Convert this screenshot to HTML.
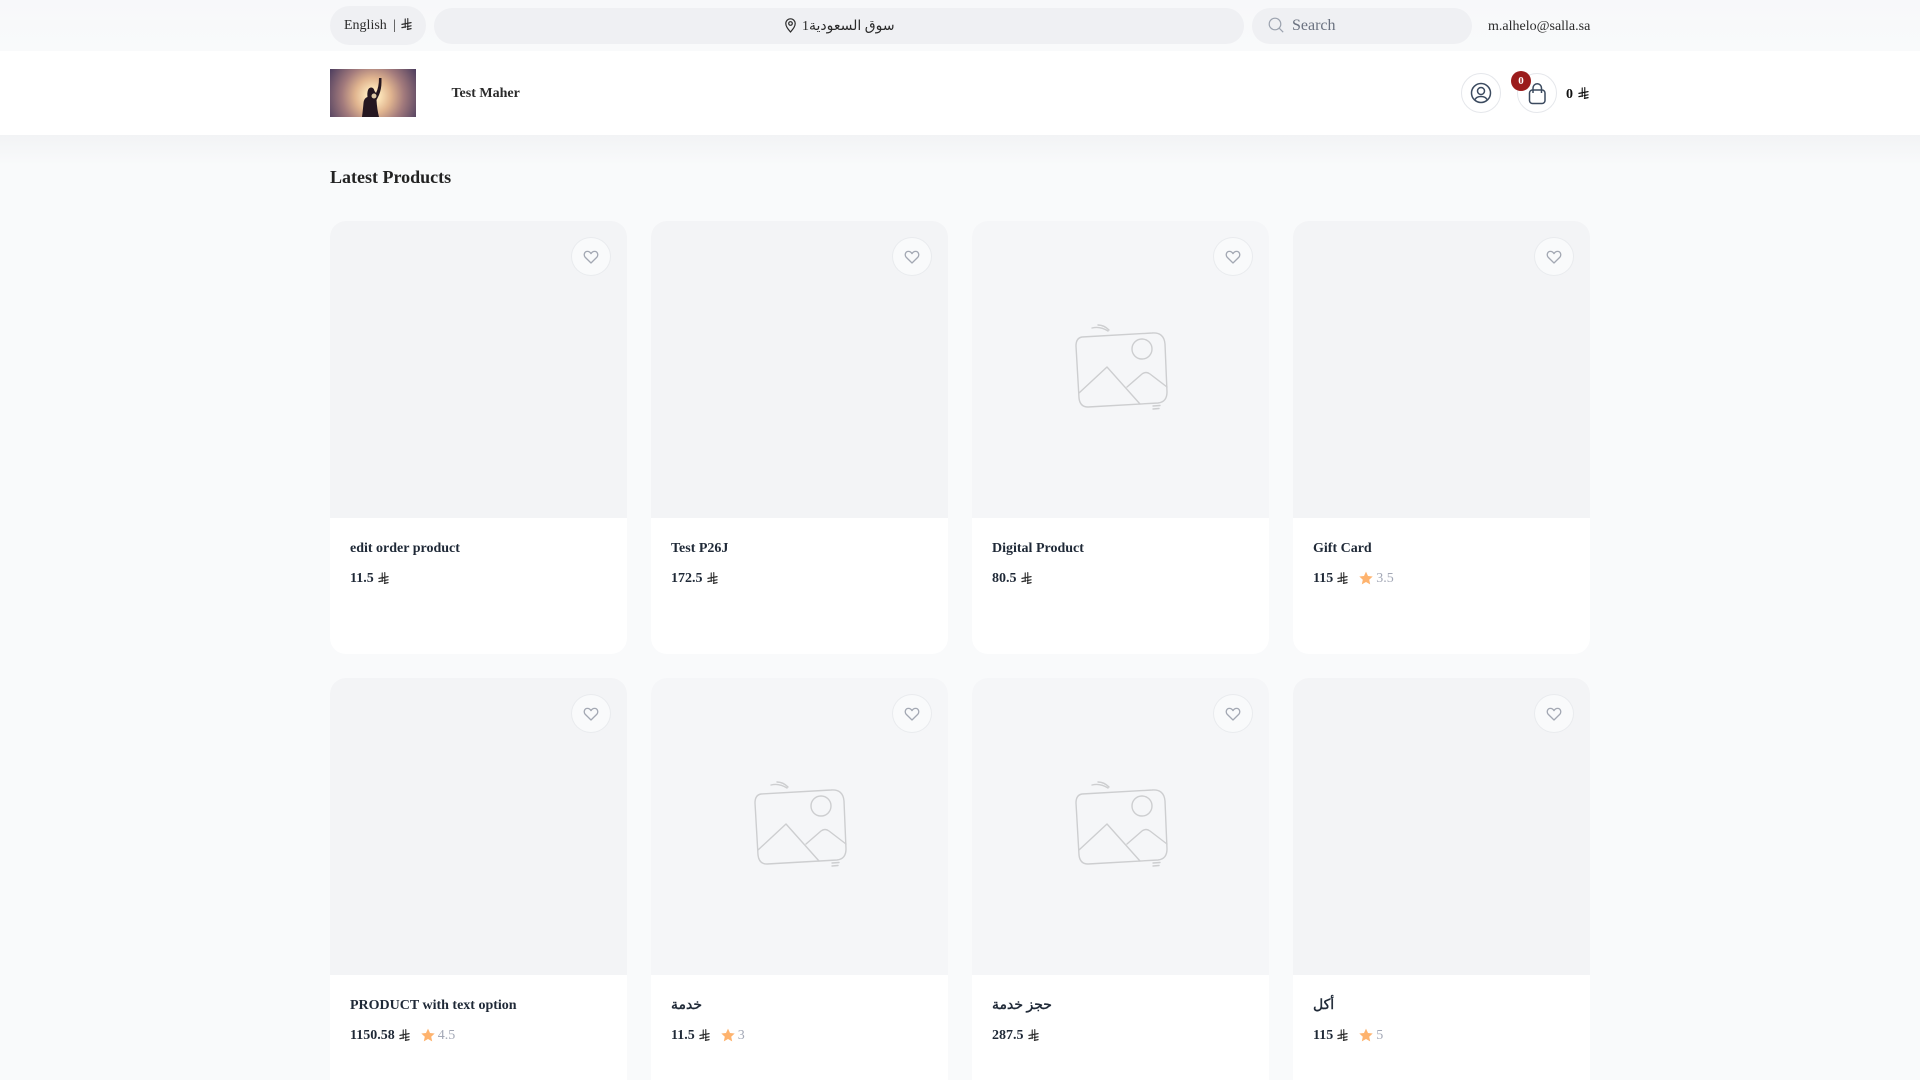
<!DOCTYPE html>
<html lang="en"><head><meta charset="utf-8"><title>Test Maher</title>
<style>
*{box-sizing:border-box}
html{margin:0;padding:0;width:1920px;height:1080px;overflow:hidden;background:#f9fafb}
body{margin:0;padding:0;position:relative;width:1920px;height:1080px;overflow:hidden;background:#f9fafb;font-family:"Liberation Serif","DejaVu Sans",serif;color:#1f2937}
.a{position:absolute}
.t{position:absolute;white-space:nowrap;line-height:20px}
.card{position:absolute;width:297px;height:433px;background:#fff;border-radius:16px;overflow:hidden}
.img{position:absolute;left:0;top:0;width:297px;height:297px;background:#f3f4f6}
.img.p{background:#f5f6f8}
.ph{position:absolute;left:68px;top:79px;width:200px;height:130px;fill:none;stroke:#cdced0;stroke-width:1.4;stroke-linecap:round;stroke-linejoin:round}
.wish{position:absolute;left:241px;top:16px;width:40px;height:39px;border-radius:50%;background:#f9fafb;border:1px solid #e9ebee;display:flex;align-items:center;justify-content:center}
.wish svg{width:16px;height:16px;fill:none;stroke:#a3a8b3;stroke-width:1.3;stroke-linejoin:round}
.name{position:absolute;left:20px;top:318px;font-size:14px;font-weight:700;line-height:20px;color:#1f2937;white-space:nowrap}
.name.ar{font-weight:400;-webkit-text-stroke:.45px #1f2937}
.price{position:absolute;left:20px;top:348px;height:20px;display:flex;align-items:center;font-size:14px;font-weight:700;color:#1f2937;white-space:nowrap}
.sar{width:11px;height:12px;margin-left:4px;margin-top:-2px;fill:none;stroke:#2b2b2b;stroke-width:1.2;stroke-linecap:round;flex:none}
.star{width:14px;height:14px;margin-left:11px;margin-top:-2px;fill:#feb36e;flex:none}
.rate{font-weight:400;color:#a3a8b6;margin-left:3px}
</style></head><body>
<svg width="0" height="0" style="position:absolute"><defs>
<symbol id="sar" viewBox="0 0 12 12" preserveAspectRatio="none"><path d="M4.600 1v8.400M7.400 .6v9.600M1 6.400 11 4.600M1 9.600l4-.7M6.600 8.600l4.400-.8M7 11.400l4-.8"/></symbol>
<symbol id="star" viewBox="0 0 14 14"><path d="M7 .6 9 5l4.700.5-3.500 3.200 1 4.700L7 11l-4.200 2.400 1-4.700L.3 5.500 5 5z"/></symbol>
<symbol id="heart" viewBox="0 0 16 16"><path d="M8 14 2.300 8.400C.2 6 1.500 2.400 4.400 2.400 6 2.400 7.200 3.300 8 4.600 8.800 3.300 10 2.400 11.600 2.400 14.500 2.400 15.800 6 13.700 8.400Z"/></symbol>
<symbol id="ph" viewBox="0 0 200 130"><path d="M42 37 112 33Q124 32 125 44L127 92Q127 102 118 103L48 107Q40 107 39 98L36 46Q36 38 42 37Z"/><circle cx="102" cy="49" r="10"/><path d="M39 93 67 67 100 104M87 87 102 74Q106 71 110 74L127 87M52 28Q60 26 68 31M58 25Q64 25 69 30M113 106 120 105.500M113 109 119 108.500"/></symbol>
</defs></svg>

<div class="a" style="left:0;top:0;width:1920px;height:51px;background:linear-gradient(#f7f8fa,#f9fafb)"></div>
<div class="a" style="left:330px;top:6px;width:96px;height:39px;border-radius:20px;background:#eff0f3"></div>
<div class="t" style="left:344px;top:16px;font-size:14px;color:#2b2b2b">English</div>
<div class="t" style="left:393px;top:16px;font-size:14px;color:#2b2b2b">|</div>
<svg class="a sar" style="left:401px;top:18px;margin:0"><use href="#sar"/></svg>
<div class="a" style="left:434px;top:8px;width:810px;height:36px;border-radius:18px;background:#eff0f3"></div>
<svg class="a" style="left:785px;top:18px" width="11" height="15" viewBox="0 0 11 15" fill="none" stroke="#2b2b2b" stroke-width="1.200"><path d="M5.500 14C3 11 .8 8.500 .8 5.500a4.700 4.700 0 0 1 9.400 0C10.200 8.500 8 11 5.500 14Z"/><circle cx="5.500" cy="5.500" r="1.800"/></svg>
<div class="t" style="left:802px;top:17px;font-size:14px;color:#2b2b2b" dir="rtl">سوق السعودية1</div>
<div class="a" style="left:1252px;top:8px;width:220px;height:36px;border-radius:18px;background:#eff0f3"></div>
<svg class="a" style="left:1268px;top:17px" width="16" height="16" viewBox="0 0 16 16" fill="none" stroke="#9ca3af" stroke-width="1.200"><circle cx="7" cy="7" r="5.800"/><path d="m11.200 11.200 4 4"/></svg>
<div class="t" style="left:1292px;top:16px;font-size:16px;color:#6b7280">Search</div>
<div class="t" style="left:1488px;top:17px;font-size:14px;color:#2b2b2b">m.alhelo@salla.sa</div>

<div class="a" style="left:0;top:135px;width:1920px;height:30px;background:linear-gradient(#f2f3f5,#f9fafb)"></div>
<div class="a" style="left:0;top:51px;width:1920px;height:84px;background:#fff"></div>
<svg class="a" style="left:330px;top:69px" width="86" height="48" viewBox="0 0 86 48">
<defs><radialGradient id="g" gradientUnits="userSpaceOnUse" cx="43" cy="27" r="50"><stop offset="0" stop-color="#fff8e0"/><stop offset=".14" stop-color="#fbe3b8"/><stop offset=".36" stop-color="#e0b48f"/><stop offset=".62" stop-color="#a27a7c"/><stop offset="1" stop-color="#4f3f5f"/></radialGradient></defs>
<rect width="86" height="48" fill="url(#g)"/>
<path d="M49 9 51.500 9 51.500 13Q51.500 20 49 26L46.500 31Q47 40 49 48L32 48Q33 40 33.500 34 34 29 37.500 28 37 24 38 21 39 18.500 41.500 18.500 44 19 44.500 22L46 24Q49 18 49 9Z" fill="#251720"/>
<circle cx="44" cy="27" r="2.500" fill="#ffe9c0" opacity=".85"/></svg>
<div class="t" style="left:451.5px;top:84px;font-size:14px;font-weight:700;color:#2b2b2b">Test Maher</div>

<div class="a" style="left:1461px;top:73px;width:40px;height:40px;border-radius:50%;background:#fff;border:1px solid #e5e7eb"></div>
<svg class="a" style="left:1470px;top:82px" width="22" height="22" viewBox="0 0 22 22" fill="none" stroke="#3b4a5f" stroke-width="1.500"><circle cx="11" cy="11" r="9.500"/><circle cx="11" cy="9" r="3.500"/><path d="M5 17.500Q6.500 14.500 11 14.500T17 17.500"/></svg>
<div class="a" style="left:1517px;top:73px;width:40px;height:40px;border-radius:50%;background:#fff;border:1px solid #e5e7eb"></div>
<svg class="a" style="left:1528px;top:83px" width="19" height="22" viewBox="0 0 19 22" fill="none" stroke="#3b4a5f" stroke-width="1.500"><rect x="1.500" y="7" width="15.500" height="13.500" rx="3"/><path d="M5 10V5a4.200 4.200 0 0 1 8.500 0v5"/></svg>
<div class="a" style="left:1511px;top:71px;width:20px;height:20px;border-radius:50%;background:#9b1c1c;color:#fff;font-size:11px;font-weight:700;line-height:20px;text-align:center">0</div>
<div class="t" style="left:1566px;top:85px;font-size:14px;font-weight:700;color:#111">0</div>
<svg class="a sar" style="left:1578px;top:87px;margin:0;stroke:#111"><use href="#sar"/></svg>

<div class="t" style="left:330px;top:167px;font-size:18px;font-weight:700;color:#222">Latest Products</div>

<div class="card" style="left:330px;top:221px"><div class="img"></div><div class="wish"><svg><use href="#heart"/></svg></div><div class="name">edit order product</div><div class="price">11.5<svg class="sar"><use href="#sar"/></svg></div></div>
<div class="card" style="left:651px;top:221px"><div class="img"></div><div class="wish"><svg><use href="#heart"/></svg></div><div class="name">Test P26J</div><div class="price">172.5<svg class="sar"><use href="#sar"/></svg></div></div>
<div class="card" style="left:972px;top:221px"><div class="img p"><svg class="ph"><use href="#ph"/></svg></div><div class="wish"><svg><use href="#heart"/></svg></div><div class="name">Digital Product</div><div class="price">80.5<svg class="sar"><use href="#sar"/></svg></div></div>
<div class="card" style="left:1293px;top:221px"><div class="img"></div><div class="wish"><svg><use href="#heart"/></svg></div><div class="name">Gift Card</div><div class="price">115<svg class="sar"><use href="#sar"/></svg><svg class="star"><use href="#star"/></svg><span class="rate">3.5</span></div></div>

<div class="card" style="left:330px;top:678px"><div class="img"></div><div class="wish"><svg><use href="#heart"/></svg></div><div class="name">PRODUCT with text option</div><div class="price">1150.58<svg class="sar"><use href="#sar"/></svg><svg class="star"><use href="#star"/></svg><span class="rate">4.5</span></div></div>
<div class="card" style="left:651px;top:678px"><div class="img p"><svg class="ph"><use href="#ph"/></svg></div><div class="wish"><svg><use href="#heart"/></svg></div><div class="name ar">خدمة</div><div class="price">11.5<svg class="sar"><use href="#sar"/></svg><svg class="star"><use href="#star"/></svg><span class="rate">3</span></div></div>
<div class="card" style="left:972px;top:678px"><div class="img p"><svg class="ph"><use href="#ph"/></svg></div><div class="wish"><svg><use href="#heart"/></svg></div><div class="name ar">حجز خدمة</div><div class="price">287.5<svg class="sar"><use href="#sar"/></svg></div></div>
<div class="card" style="left:1293px;top:678px"><div class="img"></div><div class="wish"><svg><use href="#heart"/></svg></div><div class="name ar">أكل</div><div class="price">115<svg class="sar"><use href="#sar"/></svg><svg class="star"><use href="#star"/></svg><span class="rate">5</span></div></div>
</body></html>
